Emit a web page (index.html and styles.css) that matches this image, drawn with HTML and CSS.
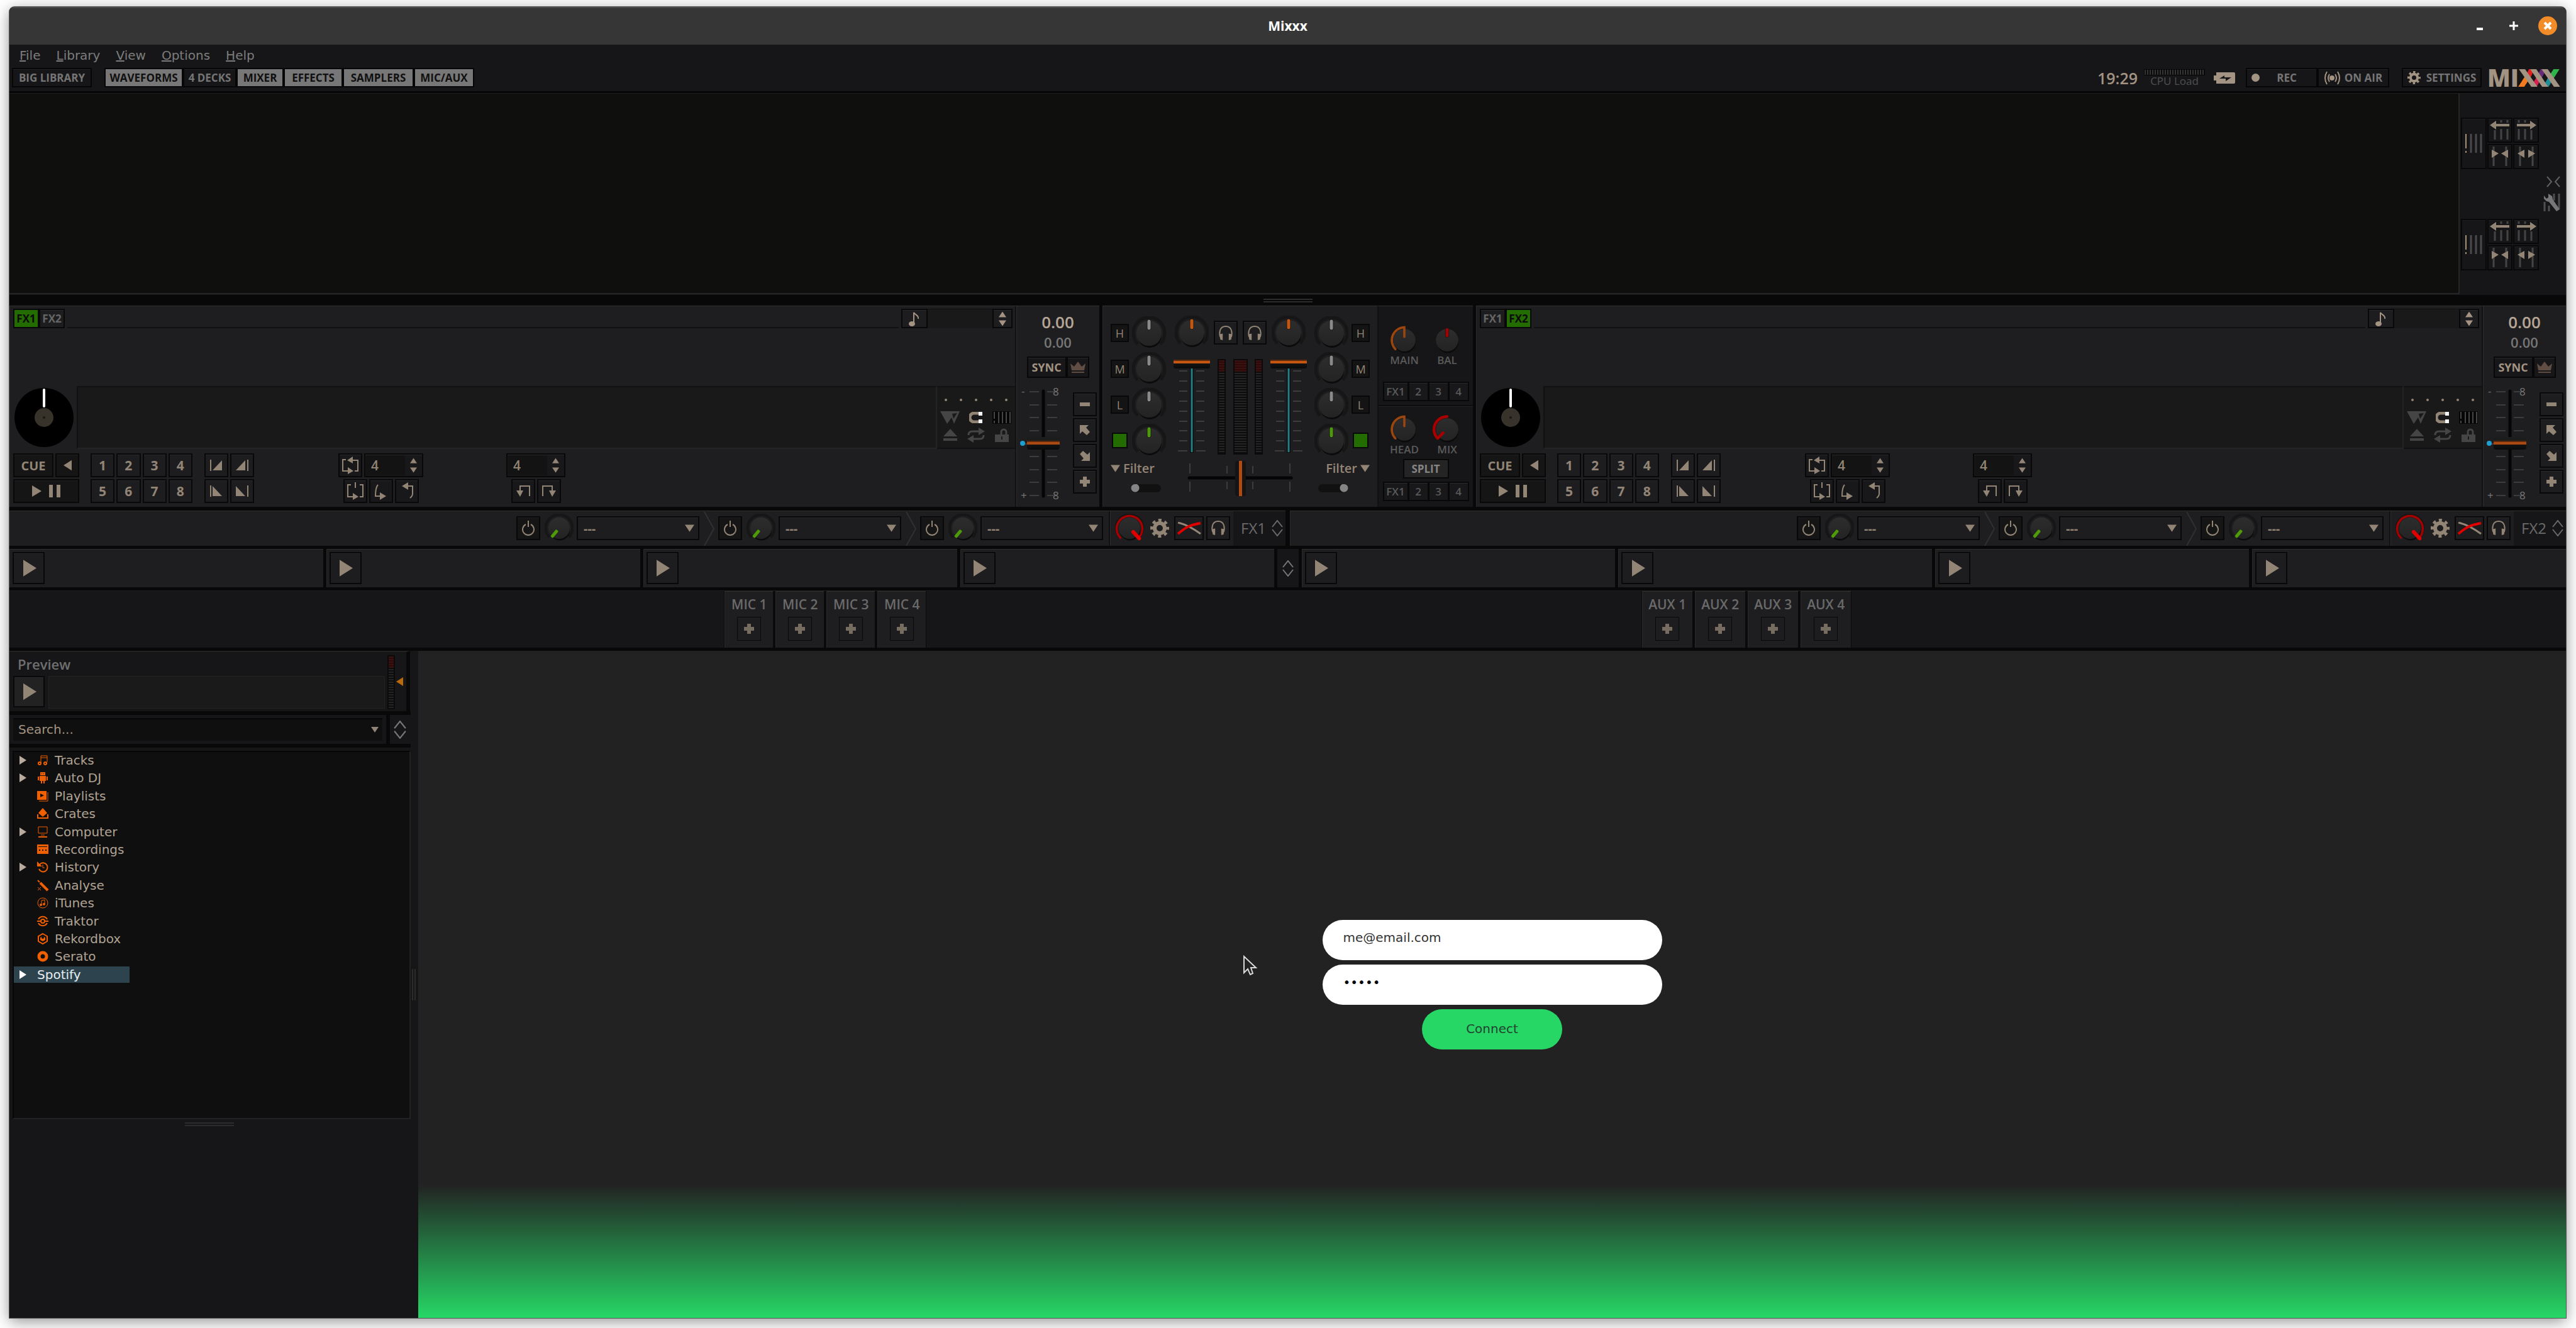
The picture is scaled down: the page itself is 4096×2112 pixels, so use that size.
FILE: index.html
```html
<!DOCTYPE html>
<html lang="en">
<head>
<meta charset="utf-8">
<title>Mixxx</title>
<link rel="stylesheet" href="styles.css">
</head>
<body>
<svg class="defs" aria-hidden="true">
  <defs>
    <linearGradient id="cap" x1="0" y1="0" x2="0" y2="1"><stop offset="0" stop-color="#2d2d2e"/><stop offset="1" stop-color="#232324"/></linearGradient>
    <clipPath id="logo-clip"><path d="M44 1H114V29H44Z"/></clipPath>
  </defs>
  <symbol id="knob" viewBox="0 0 54 54">
    <path d="M9 44A25 25 0 1 1 45 44" fill="none" stroke="#161617" stroke-width="5"/>
    <circle cx="28" cy="31" r="19" fill="#0b0b0b"/>
    <circle cx="27" cy="27" r="20" fill="url(#cap)"/>
  </symbol>
  <symbol id="knob-mid" viewBox="0 0 54 54"><use href="#knob"/><rect x="24" y="5" width="6" height="17" rx="3" fill="currentColor" stroke="#1a1a1a"/></symbol>
  <symbol id="knob-low" viewBox="0 0 54 54"><use href="#knob"/><rect x="24" y="5" width="6" height="17" rx="2" fill="currentColor" transform="rotate(-140 27 27)"/></symbol>
  <symbol id="knob-half" viewBox="0 0 54 54"><use href="#knob"/><path d="M11 43A23 23 0 0 1 27 4V21" fill="none" stroke="currentColor" stroke-width="4" stroke-linecap="round"/></symbol>
  <symbol id="knob-mix" viewBox="0 0 54 54"><use href="#knob"/><path d="M27 4A23 23 0 0 0 10 43L20 33" fill="none" stroke="currentColor" stroke-width="5" stroke-linecap="round" stroke-linejoin="round"/></symbol>
  <symbol id="knob-full" viewBox="0 0 54 54"><use href="#knob"/><path d="M11 46A24 24 0 1 1 43 46" fill="none" stroke="#a80000" stroke-width="4"/><path d="M45 46L34 34" stroke="#e00000" stroke-width="7" stroke-linecap="round"/></symbol>
  <symbol id="gear" viewBox="0 0 30 30"><g fill="none" stroke="currentColor"><circle cx="15" cy="15" r="8" stroke-width="6"/><circle cx="15" cy="15" r="12" stroke-width="6" stroke-dasharray="4.7 4.72" stroke-dashoffset="2.35"/></g></symbol>
  <symbol id="phones" viewBox="0 0 24 26"><path d="M3 20C1 14 1 2 12 2S23 14 21 20" fill="none" stroke="currentColor" stroke-width="2"/><path d="M2 15l5-1v11l-4-1zM22 15l-5-1v11l4-1z" fill="currentColor"/></symbol>
  <symbol id="play" viewBox="0 0 22 28"><path d="M0 0L22 14L0 28Z" fill="currentColor"/></symbol>
  <symbol id="updown" viewBox="0 0 18 26"><path d="M1 11L9 1L17 11M1 15L9 25L17 15" fill="none" stroke="currentColor" stroke-width="2"/></symbol>
  <symbol id="plus" viewBox="0 0 16 16"><path d="M5 0h6v5h5v6h-5v5h-6v-5h-5v-6h5z" fill="currentColor"/></symbol>
  <symbol id="minus" viewBox="0 0 16 16"><path d="M0 5h16v6h-16z" fill="currentColor"/></symbol>
  <symbol id="nw" viewBox="0 0 16 16"><path d="M0 0H14L10 4L16 11L11 16L4 10L0 14Z" fill="currentColor"/></symbol>
  <symbol id="se" viewBox="0 0 16 16"><path d="M16 16H2L6 12L0 5L5 0L12 6L16 2Z" fill="currentColor"/></symbol>
  <symbol id="caret" viewBox="0 0 16 12"><path d="M0 0H16L8 12Z" fill="currentColor"/></symbol>
  <symbol id="power" viewBox="0 0 22 24"><path d="M7 6A9 9 0 1 0 15 6M11 0V10" fill="none" stroke="currentColor" stroke-width="2"/></symbol>
  <symbol id="xfade" viewBox="0 0 38 20"><path d="M1 1Q18 5 37 19" fill="none" stroke="#938576" stroke-width="3"/><path d="M1 19C14 8 20 5 37 2" fill="none" stroke="#e00000" stroke-width="4"/></symbol>
  <symbol id="fxarrow" viewBox="0 0 17 54"><path d="M1 0L16 27L1 54" fill="none" stroke="#303032" stroke-width="2"/></symbol>
  <symbol id="note" viewBox="0 0 18 24"><ellipse cx="5" cy="20" rx="5" ry="4" fill="currentColor"/><path d="M8 20V2C10 6 16 6 15 12" fill="none" stroke="currentColor" stroke-width="2"/></symbol>
  <symbol id="crown" viewBox="0 0 24 18"><path d="M2 14L0 3L6 8L12 0L18 8L24 3L22 14Z" fill="#5f4c42"/><path d="M2 17H22" stroke="#5f4c42" stroke-width="2"/></symbol>
  <symbol id="intro-a" viewBox="0 0 22 18"><path d="M2 0V18" stroke="currentColor" stroke-width="2"/><path d="M5 17H20V1Z" fill="currentColor"/></symbol>
  <symbol id="intro-b" viewBox="0 0 22 18"><path d="M20 0V18" stroke="currentColor" stroke-width="2"/><path d="M1 17H16V1Z" fill="currentColor"/></symbol>
  <symbol id="outro-a" viewBox="0 0 22 18"><path d="M2 0V18" stroke="currentColor" stroke-width="2"/><path d="M5 1V17H20Z" fill="currentColor"/></symbol>
  <symbol id="outro-b" viewBox="0 0 22 18"><path d="M20 0V18" stroke="currentColor" stroke-width="2"/><path d="M1 1V17H16Z" fill="currentColor"/></symbol>
  <symbol id="loop" viewBox="0 0 26 28"><path d="M6 5H1V23H10M20 23H25V6H15" fill="none" stroke="currentColor" stroke-width="2"/><path d="M9 17L18 23L9 28ZM17 0L8 6L17 11Z" fill="currentColor"/></symbol>
  <symbol id="loop-in-out" viewBox="0 0 26 28"><path d="M6 4H1V23H10M20 4H25V23H20M13 0V9" fill="none" stroke="currentColor" stroke-width="2"/><path d="M9 17L18 23L9 28Z" fill="currentColor"/></symbol>
  <symbol id="loop-in" viewBox="0 0 26 28"><path d="M8 4Q4 8 4 22H12" fill="none" stroke="currentColor" stroke-width="2"/><path d="M11 16L21 22L11 28Z" fill="currentColor"/></symbol>
  <symbol id="loop-out" viewBox="0 0 26 28"><path d="M14 6H22V18Q22 22 18 25" fill="none" stroke="currentColor" stroke-width="2"/><path d="M15 0L5 6L15 12Z" fill="currentColor"/></symbol>
  <symbol id="jump-back" viewBox="0 0 26 20"><path d="M23 18V2H8V10" fill="none" stroke="currentColor" stroke-width="2"/><path d="M2 9H13L8 19Z" fill="currentColor"/></symbol>
  <symbol id="jump-fwd" viewBox="0 0 26 20"><path d="M3 18V2H18V10" fill="none" stroke="currentColor" stroke-width="2"/><path d="M13 9H24L18 19Z" fill="currentColor"/></symbol>
  <symbol id="slip" viewBox="0 0 31 20"><path d="M0 0H31L22 20L18 10L11 20ZM19 4L21 12L27 3Z" fill="currentColor" fill-rule="evenodd"/></symbol>
  <symbol id="magnet" viewBox="0 0 22 18"><path d="M15 2H8A7 7 0 0 0 8 16H15" fill="none" stroke="#938576" stroke-width="5"/><path d="M15 0h6v6h-6zM15 12h6v6h-6z" fill="#f4f4f4"/></symbol>
  <symbol id="grid" viewBox="0 0 30 20"><path d="M0 0H30V20H0Z" fill="#060606"/><path d="M3 1V12M3 15V19M10 1V19M16 1V19M22 1V19M28 1V19" stroke="#454545" stroke-width="2"/></symbol>
  <symbol id="eject" viewBox="0 0 22 20"><path d="M11 0L22 12H0ZM0 15H22V19H0Z" fill="currentColor"/></symbol>
  <symbol id="repeat" viewBox="0 0 30 24"><path d="M3 12Q3 6 9 6H20M27 12Q27 18 21 18H10" fill="none" stroke="currentColor" stroke-width="3"/><path d="M19 0L29 6L19 12ZM11 12L1 18L11 24Z" fill="currentColor"/></symbol>
  <symbol id="lock" viewBox="0 0 22 22"><path d="M10 10V6A4 4 0 0 1 18 6V10" fill="none" stroke="currentColor" stroke-width="3"/><path d="M0 10H22V22H0ZM10 13V18H12V13Z" fill="currentColor" fill-rule="evenodd"/></symbol>
  <symbol id="beats" viewBox="0 0 28 32"><path d="M2 1V24M2 28V31" stroke="#a39078" stroke-width="2"/><path d="M10 1V31M18 1V31M26 1V31" stroke="#4a4a4a" stroke-width="3"/></symbol>
  <symbol id="beat-left" viewBox="0 0 32 32"><path d="M8 16V31M18 0V4M18 14V31M28 0V4M28 14V31" stroke="#444" stroke-width="3"/><path d="M0 8L10 1V6H31V10H10V15Z" fill="#938576"/></symbol>
  <symbol id="beat-right" viewBox="0 0 32 32"><path d="M4 0V4M4 14V31M14 0V4M14 14V31M24 16V31" stroke="#444" stroke-width="3"/><path d="M32 8L22 1V6H1V10H22V15Z" fill="#938576"/></symbol>
  <symbol id="beat-in" viewBox="0 0 28 32"><path d="M4 0V31M24 0V31" stroke="#444" stroke-width="3"/><path d="M1 5L12 11L1 18ZM27 5L16 11L27 18Z" fill="#938576"/></symbol>
  <symbol id="beat-out" viewBox="0 0 28 32"><path d="M4 0V31M24 0V31" stroke="#444" stroke-width="3"/><path d="M11 5L0 11L11 18ZM17 5L28 11L17 18Z" fill="#938576"/></symbol>
  <symbol id="rate" viewBox="0 0 76 182">
    <path d="M17 9H32M45 9H56M17 30H32M45 30H61M17 50H32M45 50H61M17 71H32M45 71H61M8 92H20M17 112H32M45 112H61M17 133H32M45 133H61M17 153H32M45 153H61M17 174H32M45 174H56" stroke="#3c3c3d" stroke-width="2"/>
    <path d="M39 8V175" stroke="#050505" stroke-width="5" stroke-linecap="round"/>
    <circle cx="6" cy="91" r="4" fill="#1f9fd0"/>
  </symbol>
  <symbol id="volume" viewBox="0 0 58 158">
    <path d="M9 24H22M36 24H49M9 40H22M36 40H49M9 56H22M36 56H49M9 72H22M36 72H49M9 88H22M36 88H49M9 104H22M36 104H49M9 119H22M36 119H49M9 135H22M36 135H49M7 151H22M36 151H51" stroke="#3c3c3d" stroke-width="2"/>
    <path d="M29 10V154" stroke="#0c0c0c" stroke-width="6"/><path d="M29 10V153" stroke="#237f86" stroke-width="3"/>
  </symbol>
</svg>

<div class="window">
  <header class="titlebar">
    <h1>Mixxx</h1>
    <div class="window-buttons">
      <button aria-label="Minimise"><svg width="10" height="14"><path d="M0 12H10" stroke="#fff" stroke-width="4"/></svg></button>
      <button aria-label="Maximise"><svg width="14" height="14"><path d="M0 7H14M7 0V14" stroke="#fff" stroke-width="3"/></svg></button>
      <button class="close" aria-label="Close"><svg width="12" height="12"><path d="M1 1L11 11M11 1L1 11" stroke="#fff" stroke-width="4"/></svg></button>
    </div>
  </header>

  <nav class="menubar">
    <a href="#"><u>F</u>ile</a><a href="#"><u>L</u>ibrary</a><a href="#"><u>V</u>iew</a><a href="#"><u>O</u>ptions</a><a href="#"><u>H</u>elp</a>
  </nav>

  <div class="toolbar">
    <button class="tool w-biglib">BIG LIBRARY</button>
    <div class="toggles">
      <button class="tool on w-wave">WAVEFORMS</button><button class="tool w-decks">4 DECKS</button><button class="tool on w-mixer">MIXER</button><button class="tool on w-fx">EFFECTS</button><button class="tool on w-samp">SAMPLERS</button><button class="tool on w-mic">MIC/AUX</button>
    </div>
    <div class="status">
      <time>19:29</time>
      <div class="cpu"><span class="cpu-bar"></span><span>CPU Load</span></div>
      <svg class="battery" width="34" height="18" viewBox="0 0 34 18"><path d="M4 0H32Q34 0 34 2V16Q34 18 32 18H4V13H0V5H4Z" fill="#a39382"/><path d="M9 10L17 5V8H28L19 14V10Z" fill="#161618"/></svg>
      <div class="rec-group">
        <button class="tool rec"><span class="dot"></span><span>REC</span></button><button class="tool air"><svg width="25" height="20" viewBox="0 0 25 20"><circle cx="12" cy="10" r="4" fill="#a39382"/><path d="M8 4Q4 10 8 16M17 4Q21 10 17 16M4 0Q-2 10 4 20M21 0Q27 10 21 20" fill="none" stroke="#a39382" stroke-width="2"/></svg>ON AIR</button>
      </div>
      <button class="tool settings"><svg class="tan" width="21" height="21"><use href="#gear"/></svg>SETTINGS</button>
      <svg class="logo" width="114" height="30" viewBox="0 0 114 30" role="img" aria-label="MIXXX">
        <text x="-2" y="29" font-size="38" font-weight="800" fill="#a39382">MI</text>
        <g stroke-width="8" clip-path="url(#logo-clip)">
          <path d="M62 15L70 -2" stroke="#e02020"/><path d="M50 32L61 15" stroke="#f47a20"/>
          <path d="M80 15L89 -2" stroke="#6a2a7a"/><path d="M70 32L80 15" stroke="#d81f50"/>
          <path d="M99 15L110 -2" stroke="#2fb44a"/><path d="M89 32L99 15" stroke="#1c8f98"/>
          <path d="M51 -2L75 32M69 -2L92 32M87 -2L111 32" stroke="#a39382"/>
        </g>
      </svg>
    </div>
  </div>

  <section class="waveforms">
    <div class="wave-view"></div>
    <div class="wave-side">
      <div class="beatgrid"><button class="btn tall" aria-label="Beat grid"><svg width="28" height="32"><use href="#beats"/></svg></button><button class="btn" aria-label="Shift left"><svg width="32" height="32"><use href="#beat-left"/></svg></button><button class="btn" aria-label="Shift right"><svg width="32" height="32"><use href="#beat-right"/></svg></button><button class="btn" aria-label="Narrow"><svg width="28" height="32"><use href="#beat-in"/></svg></button><button class="btn" aria-label="Widen"><svg width="28" height="32"><use href="#beat-out"/></svg></button></div>
      <div class="wave-tools">
        <svg width="22" height="16" viewBox="0 0 22 16"><path d="M1 0L8 8L1 16M21 0L14 8L21 16" fill="none" stroke="#5f5f61" stroke-width="2"/></svg>
        <svg width="28" height="30" viewBox="0 0 28 30"><path d="M3 14V29M10 20V29M18 1V12M26 1V26" stroke="#4f4f51" stroke-width="3"/><path d="M2 4V9L6 13L10 14L22 29L27 26L16 10L15 5L9 1V7L6 9Z" fill="#77777a"/></svg>
      </div>
      <div class="beatgrid"><button class="btn tall" aria-label="Beat grid"><svg width="28" height="32"><use href="#beats"/></svg></button><button class="btn" aria-label="Shift left"><svg width="32" height="32"><use href="#beat-left"/></svg></button><button class="btn" aria-label="Shift right"><svg width="32" height="32"><use href="#beat-right"/></svg></button><button class="btn" aria-label="Narrow"><svg width="28" height="32"><use href="#beat-in"/></svg></button><button class="btn" aria-label="Widen"><svg width="28" height="32"><use href="#beat-out"/></svg></button></div>
    </div>
  </section>

  <div class="splitter"><span class="grip"></span></div>

  <section class="decks">
    <article class="deck panel">
      <div class="deck-main">
        <div class="deck-head">
          <button class="btn fx-assign active">FX1</button><button class="btn fx-assign">FX2</button>
          <span class="title-line"></span>
          <button class="btn key" aria-label="Keylock"><svg class="tan" width="18" height="24"><use href="#note"/></svg></button>
          <span class="key-field"></span>
          <div class="btn key-spin"><button aria-label="Key up"><svg class="flip" width="12" height="10"><use href="#caret"/></svg></button><button aria-label="Key down"><svg width="12" height="10"><use href="#caret"/></svg></button></div>
        </div>
        <div class="deck-wave">
          <svg class="spinny" viewBox="0 0 94 94"><circle cx="47" cy="47" r="47" fill="#000"/><circle cx="47" cy="47" r="15" fill="#37332b"/><circle cx="47" cy="47" r="2" fill="#1c1a16"/><path d="M47 3V29" stroke="#fff" stroke-width="4" stroke-linecap="round"/></svg>
          <div class="overview"></div>
          <div class="deck-options">
            <div class="stars"><i></i><i></i><i></i><i></i><i></i></div>
            <svg width="31" height="20"><use href="#slip"/></svg><svg width="22" height="18"><use href="#magnet"/></svg><svg width="30" height="20"><use href="#grid"/></svg>
            <svg width="22" height="20"><use href="#eject"/></svg><svg width="30" height="24"><use href="#repeat"/></svg><svg width="22" height="22"><use href="#lock"/></svg>
          </div>
        </div>
        <div class="deck-controls">
          <div class="transport"><button class="btn dark">CUE</button><button class="btn dark" aria-label="Reverse"><svg class="turn" width="13" height="18"><use href="#play"/></svg></button><button class="btn dark wide" aria-label="Play or pause"><svg width="46" height="20" viewBox="0 0 46 20"><path d="M0 1L15 10L0 19ZM27 0H33V20H27ZM39 0H45V20H39Z" fill="currentColor"/></svg></button></div>
          <div class="hotcues"><button class="btn">1</button><button class="btn">2</button><button class="btn">3</button><button class="btn">4</button><button class="btn">5</button><button class="btn">6</button><button class="btn">7</button><button class="btn">8</button></div>
          <div class="intro"><button class="btn" aria-label="Intro start"><svg width="22" height="18"><use href="#intro-a"/></svg></button><button class="btn" aria-label="Intro end"><svg width="22" height="18"><use href="#intro-b"/></svg></button><button class="btn" aria-label="Outro start"><svg width="22" height="18"><use href="#outro-a"/></svg></button><button class="btn" aria-label="Outro end"><svg width="22" height="18"><use href="#outro-b"/></svg></button></div>
          <div class="loops">
            <div class="row"><button class="btn sq" aria-label="Loop"><svg width="26" height="28"><use href="#loop"/></svg></button><div class="btn spin"><input value="4" aria-label="Loop size"><span><button aria-label="Double"><svg class="flip" width="11" height="9"><use href="#caret"/></svg></button><button aria-label="Halve"><svg width="11" height="9"><use href="#caret"/></svg></button></span></div></div>
            <div class="row"><button class="btn sq" aria-label="Reloop"><svg width="26" height="28"><use href="#loop-in-out"/></svg></button><button class="btn sq" aria-label="Loop in"><svg width="26" height="28"><use href="#loop-in"/></svg></button><button class="btn sq" aria-label="Loop out"><svg width="26" height="28"><use href="#loop-out"/></svg></button></div>
          </div>
          <div class="jumps">
            <div class="row"><div class="btn spin"><input value="4" aria-label="Jump size"><span><button aria-label="Double"><svg class="flip" width="11" height="9"><use href="#caret"/></svg></button><button aria-label="Halve"><svg width="11" height="9"><use href="#caret"/></svg></button></span></div></div>
            <div class="row"><button class="btn sq" aria-label="Jump back"><svg width="26" height="20"><use href="#jump-back"/></svg></button><button class="btn sq" aria-label="Jump forward"><svg width="26" height="20"><use href="#jump-fwd"/></svg></button></div>
          </div>
        </div>
      </div>
      <div class="deck-rate">
        <output class="bpm">0.00</output><output class="tap">0.00</output>
        <div class="sync"><button class="btn">SYNC</button><button class="btn" aria-label="Leader"><svg width="24" height="18"><use href="#crown"/></svg></button></div>
        <div class="rate-row">
          <div class="rate-slider"><svg width="76" height="182"><use href="#rate"/><g class="rate-text"><text x="4" y="14">-</text><text x="54" y="15">8</text><text x="3" y="180">+</text><text x="54" y="180">8</text></g></svg><input type="range" class="vert rate-input" aria-label="Rate" value="50"></div>
          <div class="rate-buttons"><button class="btn sq" aria-label="Slower"><svg width="16" height="16"><use href="#minus"/></svg></button><button class="btn sq" aria-label="Nudge down"><svg width="16" height="16"><use href="#nw"/></svg></button><button class="btn sq" aria-label="Nudge up"><svg width="16" height="16"><use href="#se"/></svg></button><button class="btn sq" aria-label="Faster"><svg width="16" height="16"><use href="#plus"/></svg></button></div>
        </div>
      </div>
    </article>

    <div class="mixer-wrap">
      <article class="mixer panel">
        <div class="strips">
          <div class="eq">
            <button class="btn kill">H</button><svg class="grey" width="54" height="54"><use href="#knob-mid"/></svg>
            <button class="btn kill">M</button><svg class="grey" width="54" height="54"><use href="#knob-mid"/></svg>
            <button class="btn kill">L</button><svg class="grey" width="54" height="54"><use href="#knob-mid"/></svg>
            <button class="btn quick" aria-label="Quick effect"></button><svg class="green" width="54" height="54"><use href="#knob-mid"/></svg>
          </div>
          <div class="vol"><svg class="orange" width="54" height="54"><use href="#knob-mid"/></svg><div class="vol-slider"><svg width="58" height="158"><use href="#volume"/></svg><input type="range" class="vert vol-input" aria-label="Volume 1" value="100"></div></div>
          <div class="centre">
            <div class="pfl"><button class="btn sq" aria-label="Headphones 1"><svg width="24" height="25"><use href="#phones"/></svg></button><button class="btn sq" aria-label="Headphones 2"><svg width="24" height="25"><use href="#phones"/></svg></button></div>
            <div class="meters"><span class="vu"></span><span class="vu main"></span><span class="vu"></span></div>
          </div>
          <div class="vol"><svg class="orange" width="54" height="54"><use href="#knob-mid"/></svg><div class="vol-slider"><svg width="58" height="158"><use href="#volume"/></svg><input type="range" class="vert vol-input" aria-label="Volume 2" value="100"></div></div>
          <div class="eq right">
            <svg class="grey" width="54" height="54"><use href="#knob-mid"/></svg><button class="btn kill">H</button>
            <svg class="grey" width="54" height="54"><use href="#knob-mid"/></svg><button class="btn kill">M</button>
            <svg class="grey" width="54" height="54"><use href="#knob-mid"/></svg><button class="btn kill">L</button>
            <svg class="green" width="54" height="54"><use href="#knob-mid"/></svg><button class="btn quick" aria-label="Quick effect"></button>
          </div>
        </div>
        <div class="bottom-strip">
          <div class="filter"><span><svg width="15" height="12"><use href="#caret"/></svg>Filter</span><input type="checkbox" class="switch" aria-label="Crossfader side left"></div>
          <div class="xfader"><svg width="166" height="56" viewBox="0 0 166 56"><path d="M3 4V20M62 8V20M103 8V20M162 4V20M3 33V49M62 33V45M103 33V45M162 33V49" stroke="#3c3c3d" stroke-width="2"/><path d="M2 27H164" stroke="#050505" stroke-width="5" stroke-linecap="round"/></svg><input type="range" class="xfader-input" aria-label="Crossfader" value="50"></div>
          <div class="filter right"><span>Filter<svg width="15" height="12"><use href="#caret"/></svg></span><input type="checkbox" class="switch" aria-label="Crossfader side right" checked></div>
        </div>
      </article>
      <aside class="master panel">
        <div class="half first">
          <div class="pots"><figure><svg class="orange dim" width="48" height="48"><use href="#knob-half"/></svg><figcaption>MAIN</figcaption></figure><figure><svg class="red" width="48" height="48"><use href="#knob-mid"/></svg><figcaption>BAL</figcaption></figure></div>
          <div class="fx-group"><button class="btn">FX1</button><button class="btn">2</button><button class="btn">3</button><button class="btn">4</button></div>
        </div>
        <div class="half second">
          <div class="pots"><figure><svg class="orange dim" width="48" height="48"><use href="#knob-half"/></svg><figcaption>HEAD</figcaption></figure><figure><svg class="red" width="48" height="48"><use href="#knob-mix"/></svg><figcaption>MIX</figcaption></figure></div>
          <button class="btn split">SPLIT</button>
          <div class="fx-group"><button class="btn">FX1</button><button class="btn">2</button><button class="btn">3</button><button class="btn">4</button></div>
        </div>
      </aside>
    </div>

    <article class="deck panel">
      <div class="deck-main">
        <div class="deck-head">
          <button class="btn fx-assign">FX1</button><button class="btn fx-assign active">FX2</button>
          <span class="title-line"></span>
          <button class="btn key" aria-label="Keylock"><svg class="tan" width="18" height="24"><use href="#note"/></svg></button>
          <span class="key-field"></span>
          <div class="btn key-spin"><button aria-label="Key up"><svg class="flip" width="12" height="10"><use href="#caret"/></svg></button><button aria-label="Key down"><svg width="12" height="10"><use href="#caret"/></svg></button></div>
        </div>
        <div class="deck-wave">
          <svg class="spinny" viewBox="0 0 94 94"><circle cx="47" cy="47" r="47" fill="#000"/><circle cx="47" cy="47" r="15" fill="#37332b"/><circle cx="47" cy="47" r="2" fill="#1c1a16"/><path d="M47 3V29" stroke="#fff" stroke-width="4" stroke-linecap="round"/></svg>
          <div class="overview"></div>
          <div class="deck-options">
            <div class="stars"><i></i><i></i><i></i><i></i><i></i></div>
            <svg width="31" height="20"><use href="#slip"/></svg><svg width="22" height="18"><use href="#magnet"/></svg><svg width="30" height="20"><use href="#grid"/></svg>
            <svg width="22" height="20"><use href="#eject"/></svg><svg width="30" height="24"><use href="#repeat"/></svg><svg width="22" height="22"><use href="#lock"/></svg>
          </div>
        </div>
        <div class="deck-controls">
          <div class="transport"><button class="btn dark">CUE</button><button class="btn dark" aria-label="Reverse"><svg class="turn" width="13" height="18"><use href="#play"/></svg></button><button class="btn dark wide" aria-label="Play or pause"><svg width="46" height="20" viewBox="0 0 46 20"><path d="M0 1L15 10L0 19ZM27 0H33V20H27ZM39 0H45V20H39Z" fill="currentColor"/></svg></button></div>
          <div class="hotcues"><button class="btn">1</button><button class="btn">2</button><button class="btn">3</button><button class="btn">4</button><button class="btn">5</button><button class="btn">6</button><button class="btn">7</button><button class="btn">8</button></div>
          <div class="intro"><button class="btn" aria-label="Intro start"><svg width="22" height="18"><use href="#intro-a"/></svg></button><button class="btn" aria-label="Intro end"><svg width="22" height="18"><use href="#intro-b"/></svg></button><button class="btn" aria-label="Outro start"><svg width="22" height="18"><use href="#outro-a"/></svg></button><button class="btn" aria-label="Outro end"><svg width="22" height="18"><use href="#outro-b"/></svg></button></div>
          <div class="loops">
            <div class="row"><button class="btn sq" aria-label="Loop"><svg width="26" height="28"><use href="#loop"/></svg></button><div class="btn spin"><input value="4" aria-label="Loop size"><span><button aria-label="Double"><svg class="flip" width="11" height="9"><use href="#caret"/></svg></button><button aria-label="Halve"><svg width="11" height="9"><use href="#caret"/></svg></button></span></div></div>
            <div class="row"><button class="btn sq" aria-label="Reloop"><svg width="26" height="28"><use href="#loop-in-out"/></svg></button><button class="btn sq" aria-label="Loop in"><svg width="26" height="28"><use href="#loop-in"/></svg></button><button class="btn sq" aria-label="Loop out"><svg width="26" height="28"><use href="#loop-out"/></svg></button></div>
          </div>
          <div class="jumps">
            <div class="row"><div class="btn spin"><input value="4" aria-label="Jump size"><span><button aria-label="Double"><svg class="flip" width="11" height="9"><use href="#caret"/></svg></button><button aria-label="Halve"><svg width="11" height="9"><use href="#caret"/></svg></button></span></div></div>
            <div class="row"><button class="btn sq" aria-label="Jump back"><svg width="26" height="20"><use href="#jump-back"/></svg></button><button class="btn sq" aria-label="Jump forward"><svg width="26" height="20"><use href="#jump-fwd"/></svg></button></div>
          </div>
        </div>
      </div>
      <div class="deck-rate">
        <output class="bpm">0.00</output><output class="tap">0.00</output>
        <div class="sync"><button class="btn">SYNC</button><button class="btn" aria-label="Leader"><svg width="24" height="18"><use href="#crown"/></svg></button></div>
        <div class="rate-row">
          <div class="rate-slider"><svg width="76" height="182"><use href="#rate"/><g class="rate-text"><text x="4" y="14">-</text><text x="54" y="15">8</text><text x="3" y="180">+</text><text x="54" y="180">8</text></g></svg><input type="range" class="vert rate-input" aria-label="Rate" value="50"></div>
          <div class="rate-buttons"><button class="btn sq" aria-label="Slower"><svg width="16" height="16"><use href="#minus"/></svg></button><button class="btn sq" aria-label="Nudge down"><svg width="16" height="16"><use href="#nw"/></svg></button><button class="btn sq" aria-label="Nudge up"><svg width="16" height="16"><use href="#se"/></svg></button><button class="btn sq" aria-label="Faster"><svg width="16" height="16"><use href="#plus"/></svg></button></div>
        </div>
      </div>
    </article>
  </section>

  <section class="effects">
    <div class="fx-rack panel">
      <div class="fx-unit"><button class="btn dark sq" aria-label="Effect on"><svg width="22" height="24"><use href="#power"/></svg></button><svg class="green" width="46" height="46"><use href="#knob-low"/></svg><label class="fx-select"><select class="btn" aria-label="Effect"><option>---</option></select><svg width="15" height="12"><use href="#caret"/></svg></label></div>
      <svg class="fx-arrow" width="17" height="54"><use href="#fxarrow"/></svg>
      <div class="fx-unit"><button class="btn dark sq" aria-label="Effect on"><svg width="22" height="24"><use href="#power"/></svg></button><svg class="green" width="46" height="46"><use href="#knob-low"/></svg><label class="fx-select"><select class="btn" aria-label="Effect"><option>---</option></select><svg width="15" height="12"><use href="#caret"/></svg></label></div>
      <svg class="fx-arrow" width="17" height="54"><use href="#fxarrow"/></svg>
      <div class="fx-unit"><button class="btn dark sq" aria-label="Effect on"><svg width="22" height="24"><use href="#power"/></svg></button><svg class="green" width="46" height="46"><use href="#knob-low"/></svg><label class="fx-select"><select class="btn" aria-label="Effect"><option>---</option></select><svg width="15" height="12"><use href="#caret"/></svg></label></div>
      <div class="fx-super"><svg width="46" height="46"><use href="#knob-full"/></svg><svg class="fx-gear" width="30" height="30"><use href="#gear"/></svg><button class="btn xf" aria-label="Mix mode"><svg width="38" height="20"><use href="#xfade"/></svg></button><button class="btn sq" aria-label="Headphones"><svg width="24" height="25"><use href="#phones"/></svg></button></div>
      <div class="fx-name"><span>FX1</span><svg width="18" height="26"><use href="#updown"/></svg></div>
    </div>
    <div class="fx-rack panel">
      <div class="fx-unit"><button class="btn dark sq" aria-label="Effect on"><svg width="22" height="24"><use href="#power"/></svg></button><svg class="green" width="46" height="46"><use href="#knob-low"/></svg><label class="fx-select"><select class="btn" aria-label="Effect"><option>---</option></select><svg width="15" height="12"><use href="#caret"/></svg></label></div>
      <svg class="fx-arrow" width="17" height="54"><use href="#fxarrow"/></svg>
      <div class="fx-unit"><button class="btn dark sq" aria-label="Effect on"><svg width="22" height="24"><use href="#power"/></svg></button><svg class="green" width="46" height="46"><use href="#knob-low"/></svg><label class="fx-select"><select class="btn" aria-label="Effect"><option>---</option></select><svg width="15" height="12"><use href="#caret"/></svg></label></div>
      <svg class="fx-arrow" width="17" height="54"><use href="#fxarrow"/></svg>
      <div class="fx-unit"><button class="btn dark sq" aria-label="Effect on"><svg width="22" height="24"><use href="#power"/></svg></button><svg class="green" width="46" height="46"><use href="#knob-low"/></svg><label class="fx-select"><select class="btn" aria-label="Effect"><option>---</option></select><svg width="15" height="12"><use href="#caret"/></svg></label></div>
      <div class="fx-super"><svg width="46" height="46"><use href="#knob-full"/></svg><svg class="fx-gear" width="30" height="30"><use href="#gear"/></svg><button class="btn xf" aria-label="Mix mode"><svg width="38" height="20"><use href="#xfade"/></svg></button><button class="btn sq" aria-label="Headphones"><svg width="24" height="25"><use href="#phones"/></svg></button></div>
      <div class="fx-name"><span>FX2</span><svg width="18" height="26"><use href="#updown"/></svg></div>
    </div>
  </section>

  <section class="samplers">
    <div class="panel"><button class="btn play" aria-label="Play sampler 1"><svg width="21" height="27"><use href="#play"/></svg></button></div>
    <div class="panel"><button class="btn play" aria-label="Play sampler 2"><svg width="21" height="27"><use href="#play"/></svg></button></div>
    <div class="panel"><button class="btn play" aria-label="Play sampler 3"><svg width="21" height="27"><use href="#play"/></svg></button></div>
    <div class="panel"><button class="btn play" aria-label="Play sampler 4"><svg width="21" height="27"><use href="#play"/></svg></button></div>
    <button class="expand" aria-label="Expand samplers"><svg width="18" height="26"><use href="#updown"/></svg></button>
    <div class="panel"><button class="btn play" aria-label="Play sampler 5"><svg width="21" height="27"><use href="#play"/></svg></button></div>
    <div class="panel"><button class="btn play" aria-label="Play sampler 6"><svg width="21" height="27"><use href="#play"/></svg></button></div>
    <div class="panel"><button class="btn play" aria-label="Play sampler 7"><svg width="21" height="27"><use href="#play"/></svg></button></div>
    <div class="panel"><button class="btn play" aria-label="Play sampler 8"><svg width="21" height="27"><use href="#play"/></svg></button></div>
  </section>

  <section class="inputs">
    <div class="input-group mic">
      <div class="panel"><span>MIC 1</span><button class="btn sq" aria-label="Add"><svg width="16" height="16"><use href="#plus"/></svg></button></div>
      <div class="panel"><span>MIC 2</span><button class="btn sq" aria-label="Add"><svg width="16" height="16"><use href="#plus"/></svg></button></div>
      <div class="panel"><span>MIC 3</span><button class="btn sq" aria-label="Add"><svg width="16" height="16"><use href="#plus"/></svg></button></div>
      <div class="panel"><span>MIC 4</span><button class="btn sq" aria-label="Add"><svg width="16" height="16"><use href="#plus"/></svg></button></div>
    </div>
    <div class="input-group aux">
      <div class="panel"><span>AUX 1</span><button class="btn sq" aria-label="Add"><svg width="16" height="16"><use href="#plus"/></svg></button></div>
      <div class="panel"><span>AUX 2</span><button class="btn sq" aria-label="Add"><svg width="16" height="16"><use href="#plus"/></svg></button></div>
      <div class="panel"><span>AUX 3</span><button class="btn sq" aria-label="Add"><svg width="16" height="16"><use href="#plus"/></svg></button></div>
      <div class="panel"><span>AUX 4</span><button class="btn sq" aria-label="Add"><svg width="16" height="16"><use href="#plus"/></svg></button></div>
    </div>
  </section>

  <section class="library">
    <aside class="sidebar">
      <div class="preview">
        <div class="preview-body">
          <span class="preview-title">Preview</span>
          <button class="btn preview-play" aria-label="Play preview"><svg width="21" height="28"><use href="#play"/></svg></button>
          <div class="preview-wave"></div>
        </div>
        <span class="vu preview-vu"></span>
        <svg class="preview-gain" width="11" height="14"><path d="M11 0V14L0 7Z" fill="#b96a0c"/></svg>
      </div>
      <div class="search-row">
        <div class="search"><input type="text" placeholder="Search..." aria-label="Search"><button aria-label="Search history"><svg width="12" height="11"><use href="#caret"/></svg></button></div>
        <button class="expand" aria-label="Expand preview"><svg width="20" height="29"><use href="#updown"/></svg></button>
      </div>
      <div class="tree-wrap">
        <ul class="tree">
          <li class="open"><svg viewBox="0 0 18 18"><path d="M6 14V2H16V12M6 5H16" fill="none" stroke="currentColor" stroke-width="1"/><circle cx="4" cy="14" r="2" fill="none" stroke="currentColor" stroke-width="2"/><circle cx="13" cy="14" r="2" fill="none" stroke="currentColor" stroke-width="2"/></svg>Tracks</li>
          <li class="open"><svg viewBox="0 0 18 18"><path d="M5 0H13V5H5ZM4 6H14V14H12V18H10V14H8V18H6V14H4ZM1 7H3V13H1ZM15 7H17V13H15Z" fill="currentColor"/><path d="M7 2h1v1h-1zM10 2h1v1h-1z" fill="#0f0f0f"/></svg>Auto DJ</li>
          <li><svg viewBox="0 0 18 18"><path d="M0 1H15V15H0ZM5 5V11L11 8Z" fill="currentColor" fill-rule="evenodd"/><path d="M3 17H17V3" fill="none" stroke="currentColor" stroke-width="1"/></svg>Playlists</li>
          <li><svg viewBox="0 0 18 18"><path d="M9 0L16 8L9 14L2 8Z" fill="currentColor"/><path d="M1 10V16H17V10" fill="none" stroke="currentColor" stroke-width="2"/></svg>Crates</li>
          <li class="open"><svg viewBox="0 0 18 18"><path d="M2 1H16V11H2ZM6 14H12" fill="none" stroke="currentColor" stroke-width="1"/><path d="M2 17H16" stroke="currentColor" stroke-width="2"/></svg>Computer</li>
          <li><svg viewBox="0 0 18 18"><path d="M0 1H18V16H0ZM2 4V5H16V4ZM3 9H5V11H3ZM8 9H10V11H8ZM13 9H15V11H13Z" fill="currentColor" fill-rule="evenodd"/></svg>Recordings</li>
          <li class="open"><svg viewBox="0 0 18 18"><path d="M4 5A7 7 0 1 1 3 12" fill="none" stroke="currentColor" stroke-width="2"/><path d="M0 0V8H8Z" fill="currentColor"/><path d="M9 5V10H12" fill="none" stroke="currentColor"/></svg>History</li>
          <li><svg viewBox="0 0 18 18"><path d="M1 1L4 4" stroke="currentColor" stroke-width="2"/><path d="M5 5L17 17" stroke="currentColor" stroke-width="4"/><path d="M1 12L6 17M6 12L1 17" stroke="currentColor" stroke-width="1"/></svg>Analyse</li>
          <li><svg viewBox="0 0 18 18"><circle cx="9" cy="9" r="8" fill="none" stroke="currentColor"/><path d="M7 12V5L12 4V11" fill="none" stroke="currentColor" stroke-width="1"/><circle cx="6" cy="12" r="2" fill="currentColor"/><circle cx="11" cy="11" r="2" fill="currentColor"/></svg>iTunes</li>
          <li><svg viewBox="0 0 18 18"><circle cx="9" cy="9" r="3" fill="none" stroke="currentColor" stroke-width="2"/><path d="M2 6A8 8 0 0 1 16 6M2 12A8 8 0 0 0 16 12M0 9H5M13 9H18" fill="none" stroke="currentColor" stroke-width="2"/></svg>Traktor</li>
          <li><svg viewBox="0 0 18 18"><path d="M9 1L16 5V13L9 17L2 13V5Z" fill="none" stroke="currentColor" stroke-width="2"/><path d="M5 7L9 5L13 7V11L9 13L5 11Z" fill="currentColor"/><circle cx="9" cy="7" r="2" fill="#0f0f0f"/></svg>Rekordbox</li>
          <li><svg viewBox="0 0 18 18"><circle cx="9" cy="9" r="6" fill="none" stroke="currentColor" stroke-width="5"/></svg>Serato</li>
          <li class="open selected">Spotify</li>
        </ul>
      </div>
      <span class="grip side-grip"></span>
    </aside>
    <main class="content">
      <form class="login" onsubmit="return false">
        <input type="email" value="me@email.com" aria-label="Email">
        <input type="password" value="12345" aria-label="Password">
        <button>Connect</button>
      </form>
      <svg class="pointer" width="22" height="32" viewBox="0 0 22 32"><path d="M1 2V28L7 22L11 31L15 29L12 20H20Z" fill="#222" stroke="#d8d8d8" stroke-width="2"/></svg>
      <span class="v-grip"></span>
    </main>
  </section>
</div>
</body>
</html>
```
FILE: styles.css
```css
* { box-sizing: border-box; }

body {
  margin: 0;
  min-height: 100vh;
  display: flex;
  padding: 11px 16px 16px 15px;
  background: #fff;
  font-family: "Open Sans", "Noto Sans", sans-serif;
  font-size: 17px;
  font-weight: 600;
  color: #938576;
}

svg { display: block; flex: none; overflow: visible; }
.defs { position: absolute; width: 0; height: 0; overflow: hidden; }

button, input, select {
  margin: 0;
  padding: 0;
  border: 0;
  background: none;
  font: inherit;
  color: inherit;
  outline: none;
}

.tan { color: #a39382; }
.grey { color: #8a8a8a; }
.green { color: #4f9a08; }
.orange { color: #c4560f; }
.orange.dim { color: #9c460f; }
.red { color: #a80000; }
.flip { transform: scaleY(-1); }
.turn { transform: scaleX(-1); }

.window {
  flex: 1;
  min-width: 0;
  display: flex;
  flex-direction: column;
  background: #080808;
  border-radius: 8px 8px 0 0;
  box-shadow: 0 0 0 1px #555, 0 5px 24px rgba(0, 0, 0, .45);
  overflow: hidden;
}

/* title bar */
.titlebar {
  height: 60px;
  display: grid;
  grid-template-columns: 1fr auto 1fr;
  align-items: center;
  background: #363636;
  border-top: 2px solid #4a4a4a;
}
.titlebar h1 {
  grid-column: 2;
  margin: 0;
  font-size: 21px;
  line-height: 28px;
  padding-bottom: 2px;
  font-weight: 700;
  color: #fff;
}
.window-buttons {
  justify-self: end;
  display: flex;
  gap: 24px;
  padding: 0 14px 2px 0;
}
.window-buttons button {
  width: 30px;
  height: 30px;
  display: grid;
  place-items: center;
}
.window-buttons .close { border-radius: 50%; background: #f28c28; }

/* menu bar */
.menubar {
  height: 34px;
  display: flex;
  align-items: center;
  gap: 1px;
  padding-left: 4px;
  background: #161618;
  font: 20px "DejaVu Sans", sans-serif;
}
.menubar a { padding: 0 12px; color: #7c7c7c; text-decoration: none; }

/* toolbar */
.toolbar {
  height: 43px;
  display: flex;
  align-items: flex-start;
  padding: 3px 9px 0 4px;
  background: #161618;
  border-bottom: 3px solid #060606;
}
.tool {
  height: 31px;
  display: flex;
  align-items: center;
  justify-content: center;
  background: #161618;
  border: 2px solid #060607;
  box-shadow: inset 0 1px 0 #232325;
  color: #757575;
  white-space: nowrap;
  font-weight: 700;
}
.tool.on { background: #777; color: #101010; box-shadow: none; }
.toggles { display: flex; margin-left: 20px; }
.w-biglib { width: 127px; }
.w-wave { width: 125px; }
.w-decks { width: 85px; }
.w-mixer { width: 75px; }
.w-fx { width: 94px; }
.w-samp { width: 113px; }
.w-mic { width: 96px; }

.status { display: flex; align-items: center; margin-left: auto; height: 31px; }
.status time { font-size: 25px; color: #a39382; }
.cpu { width: 97px; margin-left: 10px; font-size: 17px; line-height: 18px; font-weight: 400; color: #505050; text-align: center; }
.cpu span { display: block; }
.cpu .cpu-bar {
  height: 10px;
  background: repeating-linear-gradient(90deg, #333 0 2px, #0c0c0c 2px 4px);
  border: 1px solid #060606;
}
.battery { margin: 0 17px 0 14px; }
.rec-group { display: flex; }
.rec, .air { width: 114px; }
.rec span:last-child { flex: 1; padding-right: 4px; }
.rec .dot { width: 13px; height: 13px; margin-left: 7px; border-radius: 50%; background: #a39382; }
.air { gap: 7px; }
.settings { width: 127px; gap: 9px; margin: 0 11px 0 20px; }
.logo text { font-family: "Open Sans", sans-serif; }

/* shared surfaces */
.panel {
  background: #1e1e20;
  border-top: 1px solid #303031;
  border-left: 1px solid #2a2a2b;
}
.btn {
  display: flex;
  align-items: center;
  justify-content: center;
  background: #1d1d1f;
  border: 2px solid #080809;
  box-shadow: inset 0 1px 0 #29292b;
}
.btn.dark { background: #151515; box-shadow: inset 0 1px 0 #202020; }
.sq { width: 38px; height: 38px; flex: none; }
.grip { width: 78px; height: 6px; border: solid #2c2c2c; border-width: 2px 0; }

/* waveforms */
.waveforms { height: 320px; display: flex; background: #161618; border-top: 1px solid #1f1f20; }
.wave-view { flex: 1; background: #0f0f0d; border-right: 2px solid #262628; border-bottom: 2px solid #262628; }
.wave-side { width: 169px; padding: 38px 0; display: flex; flex-direction: column; justify-content: space-between; }
.beatgrid {
  width: 124px;
  height: 82px;
  margin-left: 2px;
  display: grid;
  grid-template-columns: 1fr 1fr 1fr;
  grid-template-rows: 1fr 1fr;
  gap: 2px 1px;
}
.beatgrid .btn { background: #161618; box-shadow: inset 0 1px 0 #202022; }
.beatgrid .tall { grid-row: span 2; }
.wave-tools { display: flex; flex-direction: column; align-items: flex-end; gap: 10px; padding-right: 9px; }
.splitter { height: 18px; display: grid; place-items: center; border-top: 1px solid #161618; }

/* decks */
.decks {
  height: 320px;
  display: grid;
  grid-template-columns: minmax(0, 1fr) auto minmax(0, 1fr);
  gap: 5px;
}
.deck { display: flex; }
.deck-main { flex: 1; min-width: 0; display: flex; flex-direction: column; }
.deck-head { display: flex; align-items: flex-start; padding: 4px 4px 0 5px; }
.fx-assign { width: 41px; height: 31px; font-weight: 700; color: #666; }
.fx-assign.active { background: #226c00; color: #0b0b0b; box-shadow: none; }
.title-line { flex: 1; height: 31px; margin: 0 4px; border-bottom: 2px solid #111112; }
.key { width: 42px; height: 31px; }
.key-field { width: 103px; height: 31px; background: #191919; border: solid #111; border-width: 1px 0 0; }
.key-spin { width: 32px; height: 31px; flex-direction: column; gap: 4px; color: #a39382; }
.deck-wave { height: 100px; margin-top: 92px; display: flex; }
.spinny { width: 94px; height: 94px; margin: 3px 5px 0 7px; }
.overview { flex: 1; background: #191919; border: 2px solid #111112; border-right-color: #242425; border-bottom-color: #242425; }
.deck-options {
  width: 124px;
  display: grid;
  grid-template: 28px 28px 28px / repeat(3, 1fr);
  place-items: center;
  align-content: center;
  background: #191919;
  border: solid #111112;
  border-width: 2px 0;
  color: #454545;
}
.stars { grid-column: span 3; justify-self: stretch; display: flex; justify-content: space-between; padding: 0 12px; }
.stars i { width: 4px; height: 4px; border-radius: 50%; background: #938576; }

.deck-controls { display: flex; padding: 7px 0 0 5px; font-size: 21px; font-weight: 700; }
.deck-controls > div { display: grid; grid-auto-rows: 38px; gap: 3px; }
.deck-controls .transport { width: 105px; grid-template-columns: 64px 1fr; font-size: 20px; }
.transport .wide { grid-column: span 2; }
.deck-controls .hotcues { width: 162px; margin-left: 18px; grid-template-columns: repeat(4, 1fr); }
.deck-controls .intro { margin-left: 19px; grid-template-columns: 38px 38px; }
.deck-controls .loops { margin-left: 134px; }
.deck-controls .jumps { margin-left: 132px; }
.row { display: flex; justify-content: center; gap: 3px; }
.row .btn { background: #18181a; }
.spin { width: 94px; height: 38px; padding: 1px; }
.spin input { width: 62px; height: 100%; padding-left: 8px; background: #131313; font-weight: 600; }
.spin span { flex: 1; display: flex; flex-direction: column; align-items: center; gap: 6px; }
.spin span button, .key-spin button { display: block; }

.deck-rate {
  width: 134px;
  display: flex;
  flex-direction: column;
  align-items: center;
  border-left: 2px solid #111112;
  box-shadow: inset 1px 0 0 #2c2c2d;
}
.bpm { font-size: 26px; line-height: 32px; color: #b5a595; margin-top: 9px; }
.tap { font-size: 22px; line-height: 32px; color: #777; }
.sync { display: flex; margin-top: 7px; font-size: 18px; font-weight: 700; color: #a39382; }
.sync .btn { width: 63px; height: 34px; background: #171719; }
.sync .btn:last-child { width: 36px; }
.rate-row { display: flex; align-self: stretch; justify-content: space-between; padding: 13px 4px 0; }
.rate-slider, .vol-slider, .xfader { display: grid; }
.rate-slider > *, .vol-slider > *, .xfader > * { grid-area: 1 / 1; }
.rate-text { font: 17px "Open Sans", sans-serif; fill: #777; }
.rate-buttons { display: flex; flex-direction: column; gap: 3px; padding-top: 10px; }

input[type="range"] { appearance: none; background: none; width: 100%; height: 100%; }
input[type="range"]::-webkit-slider-runnable-track { background: none; }
.vert { writing-mode: vertical-lr; direction: rtl; }
.rate-input { padding-left: 2px; }
.rate-input::-webkit-slider-thumb {
  appearance: none;
  width: 52px;
  height: 20px;
  border-radius: 4px;
  background: linear-gradient(#1c1c1c 0 6px, #5c2a0e 6px 8px, #ad4a12 8px 12px, #141414 12px, #0a0a0a);
}
.vol-input::-webkit-slider-thumb {
  appearance: none;
  width: 58px;
  height: 20px;
  border-radius: 3px;
  background: linear-gradient(#1e1e1e 0 6px, #5c2a0e 6px 8px, #c4560f 8px 12px, #141414 12px, #0a0a0a);
}
.xfader-input::-webkit-slider-thumb {
  appearance: none;
  width: 17px;
  height: 56px;
  border-radius: 4px;
  background: linear-gradient(90deg, #141414 0 6px, #b04a12 6px 11px, #141414 11px);
}

/* mixer */
.mixer-wrap { display: flex; }
.mixer { width: 437px; padding: 14px 12px 0; }
.strips { display: flex; }
.eq { display: grid; grid-template-columns: 29px 54px; grid-auto-rows: 57px; column-gap: 5px; align-items: center; justify-items: center; }
.eq.right { grid-template-columns: 54px 29px; }
.kill { width: 29px; height: 29px; background: #141414; box-shadow: none; font-size: 18px; font-weight: 400; }
.quick { width: 25px; height: 25px; background: #226c00; box-shadow: none; }
.vol { width: 58px; margin: 0 6px 0 12px; display: flex; flex-direction: column; align-items: center; }
.centre + .vol { margin: 0 12px 0 6px; }
.vol > svg { margin: 1px 0 10px; }
.pfl { display: flex; justify-content: space-between; width: 84px; padding-top: 9px; }
.meters { display: flex; justify-content: space-between; padding: 23px 6px 0; }
.vu {
  width: 13px;
  height: 152px;
  border: 2px solid #0a0a0a;
  background:
    linear-gradient(rgba(70, 5, 5, .6) 0 18px, transparent 18px),
    repeating-linear-gradient(#242425 0 2px, #0c0c0c 2px 4px);
}
.vu.main { width: 23px; }
.bottom-strip { display: flex; justify-content: space-between; padding-top: 4px; }
.filter { width: 88px; font-size: 20px; line-height: 24px; }
.filter span { display: flex; align-items: center; gap: 5px; }
.filter.right { display: flex; flex-direction: column; align-items: flex-end; }
.switch {
  appearance: none;
  display: block;
  width: 48px;
  height: 13px;
  margin: 13px 0 0 32px;
  border-radius: 7px;
  background: radial-gradient(circle at 7px 6px, #858585 6px, transparent 7px) #111;
}
.switch:checked { margin: 13px 34px 0 0; background: radial-gradient(circle at 41px 6px, #858585 6px, transparent 7px) #111; }

.master { width: 152px; background: #161618; border-left: 2px solid #101011; }
.half { display: flex; flex-direction: column; align-items: center; }
.half.first { height: 159px; padding-top: 30px; border-bottom: 2px solid #0c0c0d; }
.half.second { padding-top: 12px; border-top: 1px solid #222; }
.pots { display: flex; gap: 20px; color: #5a5a5a; font-size: 17px; line-height: 16px; }
.pots figure { margin: 0; width: 48px; }
.pots figcaption { display: flex; justify-content: center; }
.fx-group { display: flex; color: #5a5a5a; }
.first .fx-group { margin-top: 26px; }
.fx-group .btn { width: 33px; height: 31px; margin-left: -1px; background: #18181a; }
.fx-group .btn:first-child { width: 41px; margin: 0; }
.split { width: 73px; height: 31px; margin: 7px 0 5px; background: #242424; color: #858585; font-weight: 700; }

/* effects */
.effects { margin-top: 6px; height: 56px; display: grid; grid-template-columns: 1fr 1fr; gap: 7px; }
.fx-rack { display: flex; justify-content: flex-end; align-items: center; }
.fx-unit { display: flex; align-items: center; padding-bottom: 1px; }
.fx-unit > svg { margin: 0 5px 0 7px; }
.fx-select { width: 195px; display: grid; align-items: center; }
.fx-select > * { grid-area: 1 / 1; }
.fx-select select { appearance: none; width: 100%; height: 38px; padding-left: 9px; font-size: 20px; font-weight: 700; }
.fx-select svg { justify-self: end; margin-right: 8px; pointer-events: none; }
.fx-arrow { margin: 0 6px 0 7px; }
.fx-super { align-self: stretch; display: flex; align-items: center; margin-left: 9px; padding: 0 5px 2px 8px; border-left: 2px solid #111112; box-shadow: inset 1px 0 0 #2c2c2d; }
.fx-gear { margin: 0 8px 0 10px; }
.xf { width: 47px; height: 38px; margin-right: 4px; }
.fx-name { width: 83px; align-self: stretch; display: flex; align-items: center; justify-content: flex-end; gap: 9px; padding: 0 4px 2px 0; background: #161618; font-size: 24px; font-weight: 400; color: #6a6a6a; }

/* samplers and inputs */
.samplers { margin-top: 5px; display: grid; grid-template-columns: repeat(4, 1fr) 34px repeat(4, 1fr); gap: 5px; height: 61px; }
.samplers .panel { padding: 4px; }
.play { width: 51px; height: 51px; padding-left: 3px; }
.expand { display: grid; place-items: center; background: #161618; color: #77777a; }
.inputs { margin-top: 5px; height: 91px; display: flex; justify-content: space-evenly; background: #161618; border-top: 1px solid #202021; }
.input-group { display: flex; gap: 4px; background: #0a0a0a; padding: 0 1px; font-size: 21px; line-height: 24px; color: #6a6a6a; }
.input-group .panel { width: 77px; display: flex; flex-direction: column; align-items: center; padding-top: 8px; gap: 8px; }
.aux .panel { width: 80px; }
.input-group .btn { box-shadow: none; border-width: 1px; color: #776c60; }

/* library */
.library { margin-top: 5px; flex: 1; display: flex; min-height: 0; }
.sidebar { width: 650px; background: #161618; display: flex; flex-direction: column; }
.preview { height: 96px; margin-right: 13px; display: flex; padding: 5px 5px 5px 6px; border-right: 6px solid #080808; border-top: 2px solid #222; }
.preview-body { flex: 1; display: grid; grid-template-columns: 50px 1fr; grid-template-rows: 33px 52px; column-gap: 6px; margin-right: 4px; align-items: start; }
.preview-title { grid-column: span 2; padding-left: 7px; font-size: 22px; line-height: 28px; color: #6f6f6f; }
.preview-play { width: 50px; height: 50px; padding-left: 3px; background: #222; }
.preview-wave { height: 52px; background: #1a1a1a; border: 1px solid #222; }
.preview-vu { height: 86px; width: 12px; margin-right: 2px; }
.preview-gain { margin-top: 35px; }
.search-row { height: 58px; display: flex; gap: 6px; margin-right: 12px; border: solid #080808; border-width: 6px 0; background: #080808; }
.search { flex: 1; display: flex; align-items: center; background: #0f0f0f; border: 5px solid #161618; border-left-width: 6px; border-right-width: 6px; color: #938576; box-shadow: inset 0 2px 0 #060606; font: 20px "DejaVu Sans", sans-serif; }
.search input { flex: 1; padding-left: 8px; }
.search input::placeholder { color: #a39382; opacity: 1; }
.search button { padding-right: 6px; }
.search-row .expand { width: 33px; padding-right: 2px; }
.tree-wrap {
  height: 586px;
  margin: 5px 12px 0 5px;
  background: #0f0f0f;
  border: 2px solid #060606;
  border-right-color: #222;
  border-bottom-color: #222;
}
.tree {
  height: 367px;
  margin: 0;
  padding: 0;
  list-style: none;
  display: flex;
  flex-direction: column;
  justify-content: space-between;
  font: 20px/26px "DejaVu Sans", sans-serif;
  color: #b0a394;
}
.tree li { display: flex; align-items: center; padding-left: 37px; gap: 10px; }
.tree li svg { width: 18px; height: 18px; color: #f06000; }
.tree .open { padding-left: 9px; }
.tree .open::before {
  content: "";
  width: 0;
  margin-right: 7px;
  border: solid transparent;
  border-width: 7px 0 7px 11px;
  border-left-color: #b9ac9f;
}
.tree .selected { width: 184px; background: #2d444f; color: #e8eef0; }
.tree .selected::before { border-left-color: #fff; }
.side-grip { margin: 5px auto 0 279px; }

.content {
  position: relative;
  flex: 1;
  display: grid;
  place-items: center;
  background: linear-gradient(#222 80%, #26d766);
}
.login { width: 540px; display: flex; flex-direction: column; align-items: center; gap: 7px; font: 20px "DejaVu Sans", sans-serif; }
.login input { width: 100%; height: 64px; padding: 0 32px 8px 33px; border-radius: 32px; background: #fff; color: #333; }
.login input[type="password"] { color: #000; }
.login button { width: 223px; height: 64px; padding-bottom: 2px; border-radius: 32px; background: #26d766; color: #22432f; }
.pointer { position: absolute; left: 1312px; top: 484px; }
.v-grip { position: absolute; left: -10px; top: 506px; width: 6px; height: 50px; border: solid #2c2c2c; border-width: 0 2px; }
```
